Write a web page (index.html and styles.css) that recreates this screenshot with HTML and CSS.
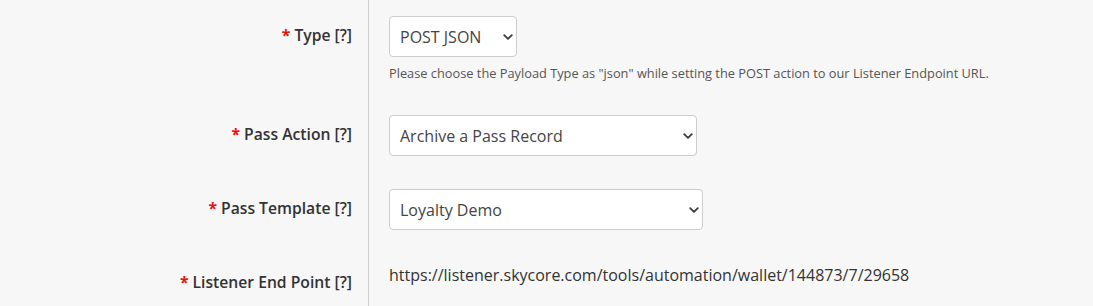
FILE: index.html
```html
<!DOCTYPE html>
<html lang="en">
<head>
<meta charset="utf-8">
<title>Form</title>
<link rel="stylesheet" href="styles.css">
</head>
<body>
<div class="form">
  <div class="row">
    <div class="label"><span class="req">*</span> Type [?]</div>
    <div class="field">
      <div class="select-wrap w-type">
        <select class="select"><option>POST JSON</option></select>
        <svg class="chev" viewBox="0 0 10 6" width="10" height="6"><path d="M1.2 1.2 L5 4.8 L8.8 1.2" fill="none" stroke="#3a3a3a" stroke-width="1.8" stroke-linecap="round" stroke-linejoin="round"/></svg>
      </div>
      <div class="help">Please choose the Payload Type as "json" while setting the POST action to our Listener Endpoint URL.</div>
    </div>
  </div>
  <div class="row">
    <div class="label"><span class="req">*</span> Pass Action [?]</div>
    <div class="field">
      <div class="select-wrap w-action">
        <select class="select"><option>Archive a Pass Record</option></select>
        <svg class="chev" viewBox="0 0 10 6" width="10" height="6"><path d="M1.2 1.2 L5 4.8 L8.8 1.2" fill="none" stroke="#3a3a3a" stroke-width="1.8" stroke-linecap="round" stroke-linejoin="round"/></svg>
      </div>
    </div>
  </div>
  <div class="row">
    <div class="label"><span class="req">*</span> Pass Template [?]</div>
    <div class="field">
      <div class="select-wrap w-template">
        <select class="select"><option>Loyalty Demo</option></select>
        <svg class="chev" viewBox="0 0 10 6" width="10" height="6"><path d="M1.2 1.2 L5 4.8 L8.8 1.2" fill="none" stroke="#3a3a3a" stroke-width="1.8" stroke-linecap="round" stroke-linejoin="round"/></svg>
      </div>
    </div>
  </div>
  <div class="row">
    <div class="label"><span class="req">*</span> Listener End Point [?]</div>
    <div class="field">
      <div class="url">https://listener.skycore.com/tools/automation/wallet/144873/7/29658</div>
    </div>
  </div>
</div>
</body>
</html>
```
FILE: styles.css
```css
html, body {
  margin: 0;
  padding: 0;
  background: #f7f7f7;
  font-family: "Open Sans", "Liberation Sans", sans-serif;
  color: #333;
}
.form {
  display: flex;
  flex-direction: column;
  min-height: 306px;
}
.row {
  display: grid;
  grid-template-columns: 369px 1fr;
}
.row:last-child {
  flex: 1;
}
.label {
  border-right: 1px solid #cfcfcf;
  text-align: right;
  padding: 15px 16px 0 0;
  line-height: 41px;
  font-size: 15.7px;
  font-weight: 600;
  color: #333;
  white-space: nowrap;
}
.req {
  color: #e8110f;
  font-weight: 700;
}
.field {
  padding: 16px 0 17px 20px;
}
.select-wrap {
  position: relative;
  height: 41px;
}
.w-type { width: 128px; }
.w-action { width: 308px; }
.w-template { width: 314px; }
.select {
  appearance: none;
  -webkit-appearance: none;
  width: 100%;
  height: 41px;
  box-sizing: border-box;
  border: 1px solid #cdcdcd;
  border-radius: 4px;
  background: #fff;
  padding: 0 24px 0 10px;
  font-family: inherit;
  font-size: 16px;
  color: #444;
  margin: 0;
}
.chev {
  position: absolute;
  right: 4px;
  top: 18px;
  pointer-events: none;
}
.help {
  margin-top: 7px;
  font-size: 12.8px;
  line-height: 18px;
  color: #555;
}
.url {
  font-size: 16px;
  line-height: 24px;
  color: #333;
}
```
